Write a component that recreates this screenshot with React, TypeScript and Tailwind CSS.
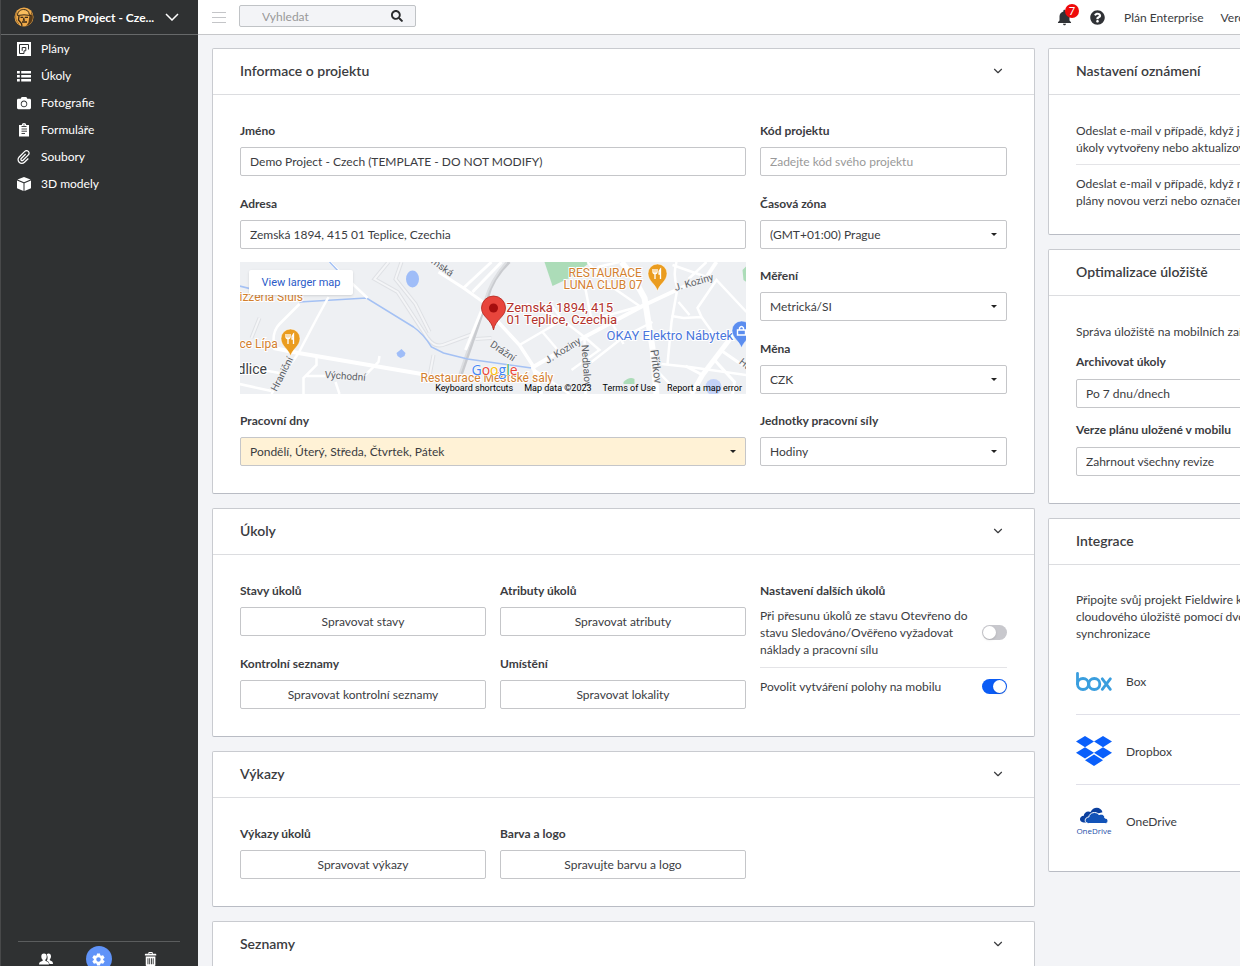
import React, { useState } from 'react';
import { ChevronDown } from 'lucide-react';
import { FaCamera, FaQuestionCircle, FaSearch } from 'react-icons/fa';
import { ImAttachment, ImBin } from 'react-icons/im';
import { IoMdNotifications, IoMdSettings } from 'react-icons/io';

interface CardProps {
    title: string;
    collapsible?: boolean;
    bodyClass?: string;
    children?: React.ReactNode;
}

interface SelectFieldProps {
    id: string;
    label: string;
    value: string;
    highlighted?: boolean;
    labelClass?: string;
}

const PlanIcon = () => (
    <svg viewBox="0 0 14 14" className="w-3.5 h-3.5" aria-hidden="true">
        <rect width="14" height="14" fill="#fff" />
        <path d="M7 11.500H2.500V2.500H11.500V7.500M5.200 8.800V5.500H8.800V8.800H7V11.500" fill="none" stroke="#2f3132" strokeWidth="1" />
    </svg>
);

const TaskIcon = () => (
    <svg viewBox="0 0 14 12" className="w-3.5 h-3" fill="#fff" aria-hidden="true">
        <path d="M0 1H2.800V3.500H0ZM0 5H2.800V7.500H0ZM0 9H2.800V11.500H0Z" />
        <path d="M4.200 1H14V3.500H4.200ZM4.200 5H14V7.500H4.200ZM4.200 9H14V11.500H4.200Z" />
    </svg>
);

const FormIcon = () => (
    <svg viewBox="0 0 14 14" className="w-3.5 h-3.5" aria-hidden="true">
        <path d="M2 2H4.800A2.200 2 0 0 1 9.200 2H12V13.500H2Z" fill="#fff" />
        <path d="M4.500 3.500H9.500M4.500 6H10M4.500 8.200H10M4.500 10.500H8" stroke="#2f3132" strokeWidth="0.9" />
        <circle cx="7" cy="1.900" r="0.600" fill="#2f3132" />
    </svg>
);

const CubeIcon = () => (
    <svg viewBox="0 0 14 14" className="w-3.5 h-3.5" aria-hidden="true">
        <path d="M7 0L13.500 2.600L7 5.300L0.500 2.600Z" fill="#fff" />
        <path d="M0 3.600L6.500 6.300V14L0 11.200Z" fill="#fff" />
        <path d="M14 3.600L7.500 6.300V14L14 11.200Z" fill="#fff" />
    </svg>
);

const PeopleIcon = () => (
    <svg viewBox="0 0 14 12" className="w-3.5 h-3" fill="#fff" aria-hidden="true">
        <path d="M9.500 0.500C11.200 0.500 12 1.700 12 3.200C12 4.700 11.500 5.600 10.800 6.200V7.200L13.200 8.500Q14 9 14 11H10.500L9.800 9L7.800 7.800Q8.800 6.200 8.600 4L7.800 1.200Q8.500 0.500 9.500 0.500Z" />
        <path d="M5 0.500C6.900 0.500 7.700 1.800 7.700 3.500C7.700 5 7.100 6.100 6.300 6.700V7.700L9 9Q10 9.500 10 11.500H0Q0 9.500 1 9L3.700 7.700V6.700C2.900 6.100 2.300 5 2.300 3.500C2.300 1.800 3.100 0.500 5 0.500Z" />
    </svg>
);

const ProjectLogo = () => (
    <svg viewBox="0 0 20 20" className="w-5 h-5 shrink-0" aria-hidden="true">
        <circle cx="10" cy="10" r="9.500" fill="#efaa49" />
        <path d="M17 4.500A9.500 9.500 0 0 1 12 19.300L14.500 15.500L15.500 8.500L17.500 8Z" fill="#5a3c19" />
        <path d="M3.500 8.500C3.500 4.500 6.500 2.500 9.500 2.500C13 2.500 15 4.500 15.200 7.200L17 8.500L10 7.800Z" fill="#f8bd5e" stroke="#3a2a17" strokeWidth="1" />
        <path d="M5 9L4.500 13L7.500 16.500L8 19M6.500 10.300H9M11 10.300H14M10 10.500L9.500 13.200H11M8 15H13" fill="none" stroke="#3a2a17" strokeWidth="1.300" />
        <path d="M2.500 5.500C1 9 1.500 14 5 17" fill="none" stroke="#8c5f26" strokeWidth="0.800" />
    </svg>
);

const BoxLogo = () => (
    <svg viewBox="0 0 36 19" className="w-9" aria-hidden="true">
        <g fill="none" stroke="#3a9ede" strokeWidth="2.800" strokeLinecap="round">
            <path d="M1.500 1.500V12" />
            <circle cx="7" cy="12" r="5.500" />
            <circle cx="18.300" cy="12" r="5.500" />
            <path d="M26.300 6.800L34.300 17.300M34.300 6.800L26.300 17.300" />
        </g>
    </svg>
);

const DropboxLogo = () => (
    <svg viewBox="0 0 36 30" className="w-9" fill="#0a5ffb" aria-hidden="true">
        <path d="M9 0L18 5.600L9 11.200L0 5.600Z" />
        <path d="M27 0L36 5.600L27 11.200L18 5.600Z" />
        <path d="M9 11.200L18 16.800L9 22.400L0 16.800Z" />
        <path d="M27 11.200L36 16.800L27 22.400L18 16.800Z" />
        <path d="M18 18.500L27 24.200L18 30L9 24.200Z" />
    </svg>
);

const OneDriveLogo = () => (
    <svg viewBox="0 0 36 28" className="w-9" aria-hidden="true">
        <path d="M7.500 15.500C2.500 15 3 9 7.800 8.800C8 5 12 3.400 14.500 5C17-.8 25-.8 26.500 5.200L20 7L12 15.500Z" fill="#0a3f9e" />
        <path d="M12.500 16.500C7.800 16 8.200 10.400 12.800 10C13.300 5.500 20 3.800 23 7.600C26.500 6.200 29 8.500 28.800 11C32.800 11.300 33 16 29.500 16.500Z" fill="#1253b8" stroke="#fff" strokeWidth="1" />
        <text x="18" y="26.500" textAnchor="middle" fontSize="8" fontFamily="Open Sans, sans-serif" fill="#1c4fa8">OneDrive</text>
    </svg>
);

const navItems = [
    { label: 'Plány', icon: <PlanIcon /> },
    { label: 'Úkoly', icon: <TaskIcon /> },
    { label: 'Fotografie', icon: <FaCamera size={14} /> },
    { label: 'Formuláře', icon: <FormIcon /> },
    { label: 'Soubory', icon: <ImAttachment size={14} /> },
    { label: '3D modely', icon: <CubeIcon /> },
];

const integrations = [
    { name: 'Box', logo: <BoxLogo /> },
    { name: 'Dropbox', logo: <DropboxLogo /> },
    { name: 'OneDrive', logo: <OneDriveLogo /> },
];

const Sidebar = () => (
    <aside className="w-[198px] h-screen shrink-0 sticky top-0 flex flex-col overflow-hidden bg-[#2f3132] text-white border-l border-[#48494a]">
        <button className="h-[35px] shrink-0 flex items-center pl-[13px] pr-[19px] border-b border-[#67696a] text-left">
            <ProjectLogo />
            <span className="ml-2 flex-1 font-bold whitespace-nowrap">Demo Project - Cze...</span>
            <svg viewBox="0 0 14 8" className="w-3.5 h-2" fill="none" stroke="#fff" strokeWidth="1.500" aria-hidden="true">
                <path d="M1 1L7 7L13 1" />
            </svg>
        </button>
        <nav>
            {navItems.map(item => (
                <a key={item.label} href="#" className="h-[27px] flex items-center pl-4">
                    <span className="w-3.5 flex justify-center">{item.icon}</span>
                    <span className="ml-2.5">{item.label}</span>
                </a>
            ))}
        </nav>
        <div className="mt-auto h-[25px] shrink-0 ml-[17px] mr-[18px] border-t border-[#5b5d5e] flex justify-between items-start pl-[21px] pr-[22px] pt-1">
            <button aria-label="Uživatelé" className="h-[26px] flex items-center">
                <PeopleIcon />
            </button>
            <button aria-label="Nastavení" className="w-[26px] h-[26px] rounded-full bg-[#6093f8] flex items-center justify-center">
                <IoMdSettings size={15} />
            </button>
            <button aria-label="Koš" className="h-[26px] flex items-center">
                <ImBin size={14} />
            </button>
        </div>
    </aside>
);

const TopBar = () => (
    <header className="h-[35px] flex items-center bg-white border-b border-[#c6c7ca] overflow-hidden">
        <div className="flex-1 flex items-center pl-3.5">
            <button aria-label="Menu" className="w-3.5 flex flex-col gap-1">
                <span className="h-px bg-[#c4c5c8]" />
                <span className="h-px bg-[#c4c5c8]" />
                <span className="h-px bg-[#c4c5c8]" />
            </button>
            <label className="ml-[13px] mb-0.5 w-[177px] h-[22px] flex items-center bg-[#f3f4f7] border border-[#c0c3c6] rounded-xs pl-[22px] pr-3">
                <input type="search" aria-label="Vyhledat" placeholder="Vyhledat" className="flex-1 min-w-0 bg-transparent outline-none placeholder:text-[#999]" />
                <FaSearch size={12} className="text-[#2b2c2e]" />
            </label>
        </div>
        <div className="w-[185px] shrink-0 flex items-center whitespace-nowrap">
            <button aria-label="Oznámení" className="relative w-4 text-[#303236]">
                <IoMdNotifications size={19} />
                <span className="absolute left-2.5 -top-1 w-3.5 h-3.5 rounded-full bg-[#ee0a0a] text-white text-[11px] leading-[14px] text-center">7</span>
            </button>
            <button aria-label="Nápověda" className="ml-[19px] text-[#303236]">
                <FaQuestionCircle size={15} />
            </button>
            <a href="#" className="ml-[19px]">Plán Enterprise</a>
            <a href="#" className="ml-[17px]">Veronika</a>
        </div>
    </header>
);

const Card = ({ title, collapsible = false, bodyClass = 'pt-7 pb-[27px]', children }: CardProps) => (
    <section className="bg-white border border-[#c9cbd0] border-b-[#b9bcc4] rounded-xs">
        <header className="h-[46px] flex items-center justify-between px-[27px] pb-0.5 border-b border-[#dcdde0]">
            <h2 className="text-[14px] font-semibold">{title}</h2>
            {collapsible && (
                <button aria-label={`Sbalit ${title}`} className="mr-0.5">
                    <ChevronDown size={14} />
                </button>
            )}
        </header>
        <div className={`px-[27px] ${bodyClass}`}>{children}</div>
    </section>
);

const controlClass = 'w-full h-[29px] px-[9px] border border-[#c5c6c9] rounded-xs outline-none';
const columnsClass = 'grid grid-cols-[246fr_246fr_247fr] gap-x-3.5';

const TextField = ({ id, label, value, placeholder }: { id: string; label: string; value?: string; placeholder?: string }) => (
    <div>
        <label htmlFor={id} className="block mb-2 leading-4 font-bold">{label}</label>
        <input id={id} type="text" defaultValue={value} placeholder={placeholder} className={`${controlClass} bg-white placeholder:text-[#999]`} />
    </div>
);

const SelectField = ({ id, label, value, highlighted = false, labelClass = 'mb-2' }: SelectFieldProps) => (
    <div>
        <label htmlFor={id} className={`block leading-4 font-bold ${labelClass}`}>{label}</label>
        <div className="relative">
            <select id={id} className={`${controlClass} appearance-none ${highlighted ? 'bg-[#fff2d6]' : 'bg-white'}`}>
                <option>{value}</option>
            </select>
            <svg viewBox="0 0 6 3" className="absolute right-2.5 top-[13px] w-1.5 pointer-events-none" aria-hidden="true">
                <path d="M0 0H6L3 3Z" fill="#222" />
            </svg>
        </div>
    </div>
);

const ActionField = ({ label, action }: { label: string; action: string }) => (
    <div>
        <h3 className="mb-2 leading-4 font-bold">{label}</h3>
        <button className="w-full h-[29px] border border-[#c5c6c9] rounded-xs bg-white">{action}</button>
    </div>
);

const Toggle = ({ id, initial }: { id: string; initial: boolean }) => {
    const [checked, setChecked] = useState(initial);

    return (
        <input
            id={id}
            type="checkbox"
            role="switch"
            checked={checked}
            onChange={() => setChecked(!checked)}
            className="appearance-none shrink-0 w-[25px] h-[15px] p-px rounded-full bg-[#c8c8cd] checked:bg-[#0b5cf5] before:block before:w-[13px] before:h-[13px] before:rounded-full before:bg-white before:shadow checked:before:ml-2.5"
        />
    );
};

const PoiPin = ({ x, y, color, children }: { x: number; y: number; color: string; children: React.ReactNode }) => (
    <g transform={`translate(${x} ${y})`}>
        <path d="M0 17C-2 10-9.500 7-9.500-.500A9.500 9.500 0 0 1 9.500-.500C9.500 7 2 10 0 17Z" fill={color} stroke="#fff" strokeWidth="0.500" />
        {children}
    </g>
);

const Fork = () => (
    <path d="M-2.500-5V5M-4.500-5V-2Q-4.500-.500-2.500-.500T-.500-2V-5M3 5V-5Q1-3 1.500 0H3" fill="none" stroke="#fff" strokeWidth="1.300" />
);

const ProjectMap = () => (
    <div className="relative h-[132px] mt-[13px] overflow-hidden bg-[#eef0f3] font-[Roboto,sans-serif]">
        <svg viewBox="0 0 507 132" preserveAspectRatio="xMidYMid slice" className="w-full h-full" role="img" aria-label="Mapa projektu">
            <rect width="507" height="132" fill="#eef0f3" />
            <path d="M305 0H351L330 16L313 24Z" fill="#acdcb8" />
            <path d="M503 8L507 4V20L504 18Z" fill="#acdcb8" />
            <path d="M384 120Q390 114 395 117V122H384Z" fill="#acdcb8" />
            <ellipse cx="173" cy="17" rx="6.500" ry="8.500" fill="#9fbdf8" />
            <path d="M157 91L162 87L166 91L165 94L161 96L158 94Z" fill="#9fbdf8" />
            {/* side streets */}
            <g fill="none" stroke="#dfe1e5" strokeWidth="4">
                <path d="M149 0L135 17L158 30L188 76Q196 87 206 82L236 71" />
                <path d="M12 76L20 56M194 93L190 114M236 77L252 76" />
                <path d="M162 0L156 17L176 42L190 70" />
            </g>
            <g fill="none" stroke="#f4f5f7" strokeWidth="2">
                <path d="M149 0L135 17L158 30L188 76Q196 87 206 82L236 71" />
                <path d="M12 76L20 56M194 93L190 114M236 77L252 76" />
                <path d="M162 0L156 17L176 42L190 70" />
            </g>
            <path d="M270 0Q253 16 248 36L222 112" fill="none" stroke="#c9cbcf" strokeWidth="3" />
            <path d="M267 0Q251 18 245 39L220 112" fill="none" stroke="#dcdee1" strokeWidth="2" />
            {/* river */}
            <path d="M0 24L20 29M60 40L127 36L174 65Q184 72 192 85L204 91L228 97L292 106" fill="none" stroke="#a4c1f4" strokeWidth="1.500" />
            <g fill="none" stroke="#fff" strokeWidth="2.500">
                <path d="M90 0L128 36M34 78Q34 68 40 62L60 42M0 122L32 129M0 104L40 111" />
                <path d="M89 35L78 55L59 91Q50 105 42 113L32 132" />
                <path d="M34 86L59 91L188 113" strokeWidth="4" />
                <path d="M77 94V103L64 116V132M67 114H86M96 120L100 132M120 119L139 100L140 94" />
                <path d="M199 10L224 26L245 41L226 88M224 26L252 0M233 30L262 0" strokeWidth="3" />
                <path d="M255 56L280 83L293 103L302 132" strokeWidth="3.500" />
                <path d="M280 83L323 58L345 75M303 70L320 90M323 58L311 42M287 42L323 58" />
                <path d="M292 106L345 75L405 43L437 28L467 15L477 0" strokeWidth="4" />
                <path d="M292 106L330 132M345 75L346 132M345 75L360 88L332 108M372 60L384 82" />
                <path d="M348 0L360 14L374 26L400 44M358 5L380 0M345 22L352 58L405 43" />
                <path d="M382 0L393 14L405 36L407 48L413 86L417 132" strokeWidth="6" />
                <path d="M413 101L450 105L507 113M413 60L384 75L352 100M417 108L440 132" />
                <path d="M437 0Q433 14 438 26L432 60L428 102M433 3L467 15M467 0L449 17" />
                <path d="M432 54L444 56L462 55L474 72L492 78M462 55L458 46L477 18L507 50M439 40L450 53" />
                <path d="M495 71L463 113L452 132" strokeWidth="5" />
                <path d="M475 98L495 120L493 132M481 88L507 106M463 113L446 104" strokeWidth="3" />
            </g>
            <path d="M90 0L111 22" fill="none" stroke="#a4c1f4" strokeWidth="1.500" />
            <circle cx="474" cy="125" r="8" fill="#c3d2f7" />
            <g fontSize="10" fill="#5c6166" stroke="#f2f3f5" strokeWidth="2" paintOrder="stroke">
                <text transform="translate(37 130) rotate(-63)">Hraniční</text>
                <text transform="translate(85 116) rotate(4)">Východní</text>
                <text transform="translate(182 -6) rotate(36)">Zemská</text>
                <text transform="translate(250 84) rotate(34)">Drážní</text>
                <text transform="translate(308 102) rotate(-32)">J. Koziny</text>
                <text transform="translate(436 29) rotate(-16)">J. Koziny</text>
                <text transform="translate(342 83) rotate(86)">Nedbalov</text>
                <text transform="translate(411 88) rotate(83)" fontSize="11">Přítkov</text>
                <text transform="translate(499 101) rotate(38)">Hu</text>
            </g>
            <g fontSize="12" fill="#d3802f" stroke="#fff" strokeWidth="2" paintOrder="stroke">
                <text x="0" y="39">izzeria Sluis</text>
                <text x="0" y="86">ce Lípa</text>
                <text x="329" y="15">RESTAURACE</text>
                <text x="324" y="27">LUNA CLUB 07</text>
                <text x="181" y="120">Restaurace Městské sály</text>
                <text x="-2" y="112" fontSize="14" fill="#3c4043">dlice</text>
                <text x="267" y="50" fontSize="13" fill="#b3322c">Zemská 1894, 415</text>
                <text x="267" y="62" fontSize="13" fill="#b3322c">01 Teplice, Czechia</text>
                <text x="367" y="78" fontSize="13" fill="#4a76dc">OKAY Elektro Nábytek</text>
            </g>
            <PoiPin x={51} y={77} color="#ea9c1f"><Fork /></PoiPin>
            <PoiPin x={418} y={12} color="#ea9c1f"><Fork /></PoiPin>
            <PoiPin x={502} y={69} color="#5b8def">
                <path d="M-4-1H4V4H-4ZM-2-1V-3Q0-6 2-3V-1" fill="none" stroke="#fff" strokeWidth="1.400" />
            </PoiPin>
            <path d="M254 68C252 57 242 55 242 46A12 12 0 0 1 266 46C266 55 256 57 254 68Z" fill="#e8453c" stroke="#b3261e" strokeWidth="0.800" />
            <circle cx="254" cy="46" r="4.500" fill="#a50e0e" />
            <text x="232" y="113" fontSize="14" fontFamily="Open Sans, sans-serif" stroke="#fff" strokeWidth="1" paintOrder="stroke">
                <tspan fill="#4285f4">G</tspan><tspan fill="#ea4335">o</tspan><tspan fill="#fbbc04">o</tspan><tspan fill="#4285f4">g</tspan><tspan fill="#34a853">l</tspan><tspan fill="#ea4335">e</tspan>
            </text>
        </svg>
        <a href="#" className="absolute left-[9px] top-2 w-[104px] h-[25px] bg-white rounded-xs shadow-sm flex items-center justify-center text-[11px] text-[#2a5bc8]">
            View larger map
        </a>
        <div className="absolute right-1 bottom-0 flex gap-[11px] leading-3 text-[9px] text-black">
            <button>Keyboard shortcuts</button>
            <span>Map data ©2023</span>
            <a href="#">Terms of Use</a>
            <a href="#">Report a map error</a>
        </div>
    </div>
);

const ProjectInfoCard = () => (
    <Card title="Informace o projektu" collapsible>
        <div className={columnsClass}>
            <div className="col-span-2">
                <div className="flex flex-col gap-5">
                    <TextField id="name" label="Jméno" value="Demo Project - Czech (TEMPLATE - DO NOT MODIFY)" />
                    <TextField id="address" label="Adresa" value="Zemská 1894, 415 01 Teplice, Czechia" />
                </div>
                <ProjectMap />
                <div className="mt-[19px]">
                    <SelectField id="workdays" label="Pracovní dny" value="Pondělí, Úterý, Středa, Čtvrtek, Pátek" highlighted />
                </div>
            </div>
            <div className="flex flex-col justify-between">
                <TextField id="code" label="Kód projektu" placeholder="Zadejte kód svého projektu" />
                <SelectField id="timezone" label="Časová zóna" value="(GMT+01:00) Prague" />
                <SelectField id="units" label="Měření" value="Metrická/SI" />
                <SelectField id="currency" label="Měna" value="CZK" />
                <SelectField id="labor" label="Jednotky pracovní síly" value="Hodiny" />
            </div>
        </div>
    </Card>
);

const TasksCard = () => (
    <Card title="Úkoly" collapsible>
        <div className={columnsClass}>
            <div className="col-span-2 grid grid-cols-2 gap-x-3.5 gap-y-5">
                <ActionField label="Stavy úkolů" action="Spravovat stavy" />
                <ActionField label="Atributy úkolů" action="Spravovat atributy" />
                <ActionField label="Kontrolní seznamy" action="Spravovat kontrolní seznamy" />
                <ActionField label="Umístění" action="Spravovat lokality" />
            </div>
            <div>
                <h3 className="mb-2 leading-4 font-bold">Nastavení dalších úkolů</h3>
                <div className="flex items-center justify-between gap-2 pb-[9px] border-b border-[#e4e4e7]">
                    <label htmlFor="require-costs">Při přesunu úkolů ze stavu Otevřeno do stavu Sledováno/Ověřeno vyžadovat náklady a pracovní sílu</label>
                    <Toggle id="require-costs" initial={false} />
                </div>
                <div className="flex items-center justify-between pt-2.5">
                    <label htmlFor="mobile-locations">Povolit vytváření polohy na mobilu</label>
                    <Toggle id="mobile-locations" initial={true} />
                </div>
            </div>
        </div>
    </Card>
);

export default function App() {
    return (
        <div className="flex min-h-screen bg-[#f3f4f7] font-[Lato,sans-serif] text-[12px] leading-[17px] text-[#3b3c3f]">
            <Sidebar />
            <div className="flex-1 min-w-0 h-screen overflow-hidden">
                <TopBar />
                <main className="grid grid-cols-[minmax(823px,2fr)_minmax(400px,1fr)] items-start gap-x-[13px] pl-3.5 pt-[13px]">
                    <div className="flex flex-col gap-3.5">
                        <ProjectInfoCard />
                        <TasksCard />
                        <Card title="Výkazy" collapsible>
                            <div className={columnsClass}>
                                <ActionField label="Výkazy úkolů" action="Spravovat výkazy" />
                                <ActionField label="Barva a logo" action="Spravujte barvu a logo" />
                            </div>
                        </Card>
                        <Card title="Seznamy" collapsible />
                    </div>
                    <div className="flex flex-col gap-3.5">
                        <Card title="Nastavení oznámení" bodyClass="pt-[27px] pb-[25px]">
                            <p className="pb-2 border-b border-[#e4e4e7]">
                                Odeslat e-mail v případě, když jsou<br />úkoly vytvořeny nebo aktualizovány
                            </p>
                            <p className="pt-2.5">
                                Odeslat e-mail v případě, když mají<br />plány novou verzi nebo označení
                            </p>
                        </Card>
                        <Card title="Optimalizace úložiště" bodyClass="pt-[27px] pb-[27px]">
                            <p className="mb-3.5">Správa úložiště na mobilních zařízeních</p>
                            <div className="flex flex-col gap-3.5">
                                <SelectField id="archive" label="Archivovat úkoly" value="Po 7 dnu/dnech" labelClass="mb-[9px]" />
                                <SelectField id="versions" label="Verze plánu uložené v mobilu" value="Zahrnout všechny revize" labelClass="mb-[9px]" />
                            </div>
                        </Card>
                        <Card title="Integrace" bodyClass="pt-[26px] pb-[17px]">
                            <p className="mb-[3px]">
                                Připojte svůj projekt Fieldwire k službě<br />cloudového úložiště pomocí dvousměrné<br />synchronizace
                            </p>
                            <ul className="divide-y divide-[#e0e0e8]">
                                {integrations.map(({ name, logo }) => (
                                    <li key={name} className="flex items-center gap-3.5 pt-5 pb-[17px]">
                                        <span className="w-9 h-8 flex items-center">{logo}</span>
                                        <span>{name}</span>
                                    </li>
                                ))}
                            </ul>
                        </Card>
                    </div>
                </main>
            </div>
        </div>
    );
}
